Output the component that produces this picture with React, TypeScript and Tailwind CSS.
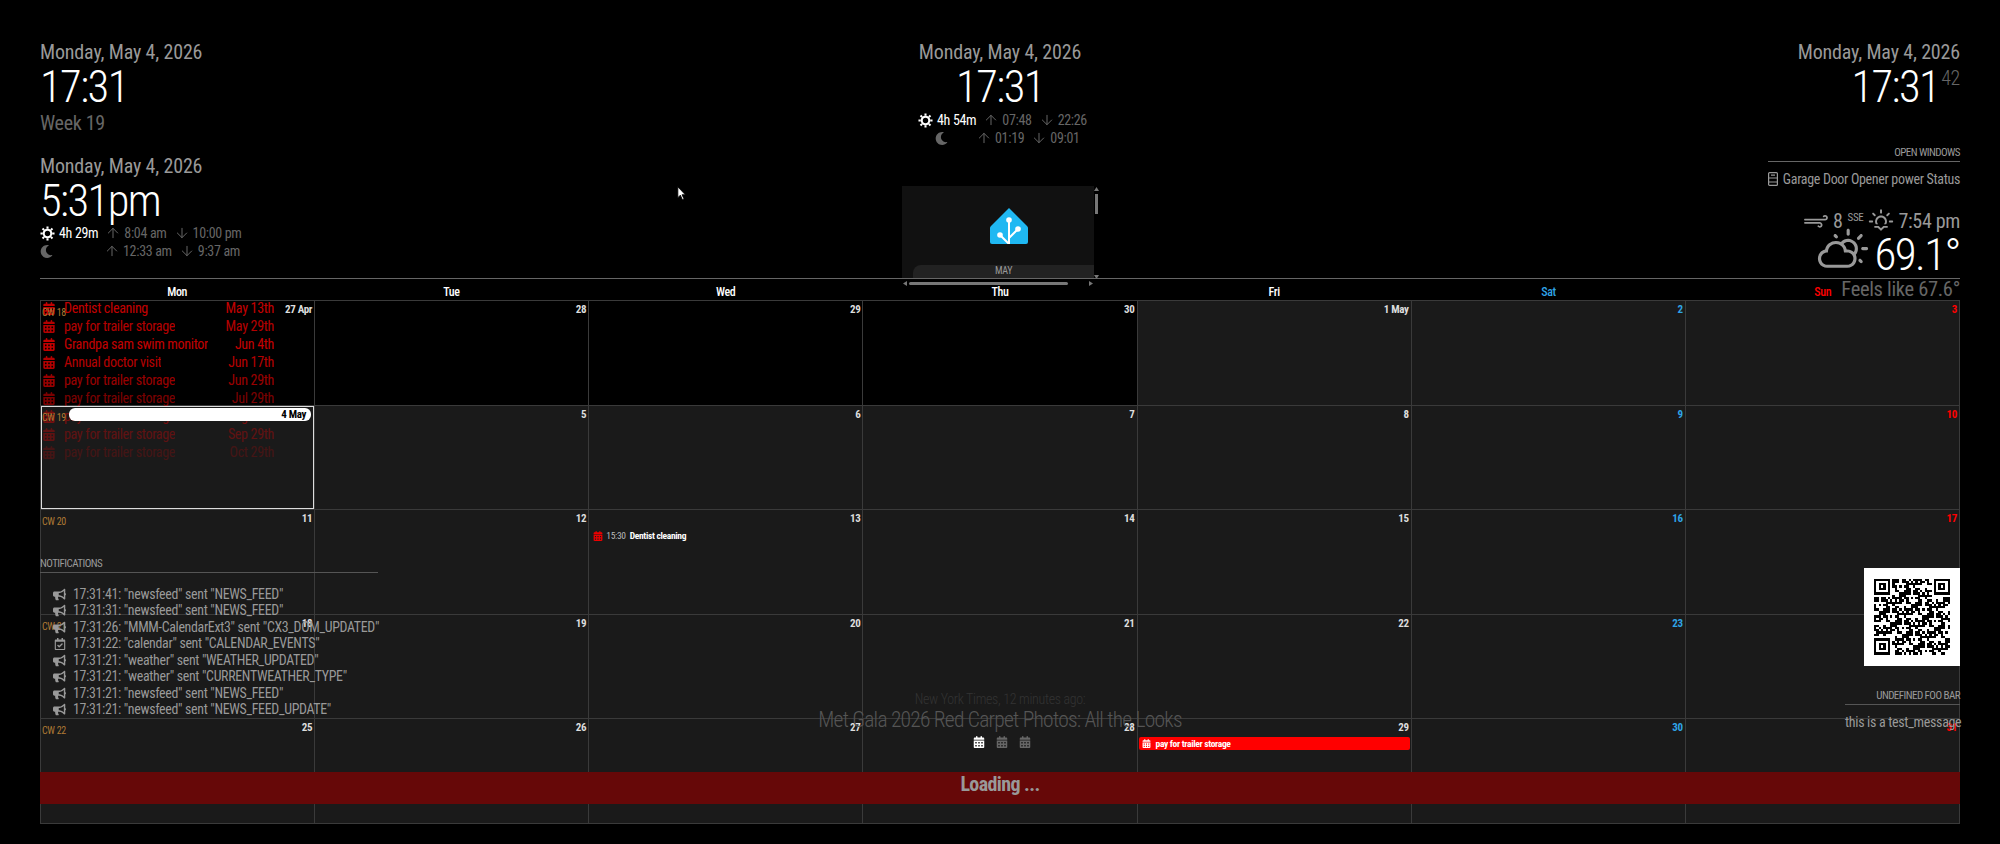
import { ArrowUp, ArrowDown } from "lucide-react";
import { FaBullhorn, FaMoon, FaRegCalendarCheck } from "react-icons/fa";
import { FaCalendarDays } from "react-icons/fa6";
import { WiDayCloudy, WiStrongWind, WiSunset } from "react-icons/wi";

const weekdays = [
  { label: "Mon", color: "text-white" },
  { label: "Tue", color: "text-white" },
  { label: "Wed", color: "text-white" },
  { label: "Thu", color: "text-white" },
  { label: "Fri", color: "text-white" },
  { label: "Sat", color: "text-[#2fa4e7]" },
  { label: "Sun", color: "text-[#f00]" },
];

const weeks = [
  { cw: 18, days: ["27 Apr", "28", "29", "30", "1 May", "2", "3"] },
  { cw: 19, days: ["4 May", "5", "6", "7", "8", "9", "10"] },
  { cw: 20, days: ["11", "12", "13", "14", "15", "16", "17"] },
  { cw: 21, days: ["18", "19", "20", "21", "22", "23", "24"] },
  { cw: 22, days: ["25", "26", "27", "28", "29", "30", "31"] },
];

const agenda = [
  { title: "Dentist cleaning", date: "May 13th", fade: "opacity-[.76]" },
  { title: "pay for trailer storage", date: "May 29th", fade: "opacity-[.7]" },
  { title: "Grandpa sam swim monitor", date: "Jun 4th", fade: "opacity-[.76]" },
  { title: "Annual doctor visit", date: "Jun 17th", fade: "opacity-[.7]" },
  { title: "pay for trailer storage", date: "Jun 29th", fade: "opacity-[.6]" },
  { title: "pay for trailer storage", date: "Jul 29th", fade: "opacity-[.48]" },
  { title: "pay for trailer storage", date: "Aug 29th", fade: "opacity-[.4]" },
  { title: "pay for trailer storage", date: "Sep 29th", fade: "opacity-[.3]" },
  { title: "pay for trailer storage", date: "Oct 29th", fade: "opacity-[.18]" },
];

const notifications = [
  { text: '17:31:41: "newsfeed" sent "NEWS_FEED"' },
  { text: '17:31:31: "newsfeed" sent "NEWS_FEED"' },
  { text: '17:31:26: "MMM-CalendarExt3" sent "CX3_DOM_UPDATED"' },
  { text: '17:31:22: "calendar" sent "CALENDAR_EVENTS"', check: true },
  { text: '17:31:21: "weather" sent "WEATHER_UPDATED"' },
  { text: '17:31:21: "weather" sent "CURRENTWEATHER_TYPE"' },
  { text: '17:31:21: "newsfeed" sent "NEWS_FEED"' },
  { text: '17:31:21: "newsfeed" sent "NEWS_FEED_UPDATE"' },
];

// fake qr matrix: real finder squares, seeded noise for the rest
function qrCells() {
  const size = 33;
  const cells: [number, number][] = [];
  let seed = 19;
  const finder = (x: number, y: number) => {
    const dx = x < 7 ? x : x - 26;
    const dy = y < 7 ? y : y - 26;
    const ring = Math.min(dx, dy, 6 - dx, 6 - dy);
    return ring === 0 || ring === 2;
  };
  for (let y = 0; y < size; y++) {
    for (let x = 0; x < size; x++) {
      seed = (seed * 73 + 41) % 1021;
      const inFinder = (x < 8 && y < 8) || (x > 24 && y < 8) || (x < 8 && y > 24);
      if (inFinder ? x !== 7 && x !== 25 && y !== 7 && y !== 25 && finder(x, y) : seed % 100 < 52) {
        cells.push([x, y]);
      }
    }
  }
  return cells;
}

function SunIcon() {
  return (
    <svg viewBox="0 0 16 16" className="w-[15px] h-[15px] shrink-0">
      <circle cx="8" cy="8" r="4" fill="none" stroke="#fff" strokeWidth="2.2" />
      <path d="M8 0.5V3 M8 13V15.5 M0.5 8H3 M13 8H15.5 M2.7 2.7L4.4 4.4 M11.6 11.6L13.3 13.3 M13.3 2.7L11.6 4.4 M4.4 11.6L2.7 13.3" stroke="#fff" strokeWidth="2.2" />
    </svg>
  );
}

function SunRow({ daylight, rise, set, offset = "" }: { daylight: string; rise: string; set: string; offset?: string }) {
  return (
    <div className={`flex items-center h-[18px] text-[14px] text-[#666] ${offset}`}>
      <SunIcon />
      <span className="ml-[4px] text-white">{daylight}</span>
      <ArrowUp className="ml-[7px] w-[16px] h-[16px] shrink-0" strokeWidth={1.5} />
      <span className="ml-[3px]">{rise}</span>
      <ArrowDown className="ml-[7px] w-[16px] h-[16px] shrink-0" strokeWidth={1.5} />
      <span className="ml-[3px]">{set}</span>
    </div>
  );
}

function MoonRow({ rise, set, indent, offset = "" }: { rise: string; set: string; indent: string; offset?: string }) {
  return (
    <div className={`flex items-center h-[18px] text-[14px] text-[#666] ${offset}`}>
      <FaMoon className="text-[#666] text-[13px] shrink-0" />
      <ArrowUp className={`${indent} w-[16px] h-[16px] shrink-0`} strokeWidth={1.5} />
      <span className="ml-[3px]">{rise}</span>
      <ArrowDown className="ml-[7px] w-[16px] h-[16px] shrink-0" strokeWidth={1.5} />
      <span className="ml-[3px]">{set}</span>
    </div>
  );
}

function DateLine() {
  return <div className="text-[20px] leading-[24px] tracking-[-0.008em] text-[#999]">Monday, May 4, 2026</div>;
}

function ClockTime({ children }: { children: string }) {
  return <div className="text-[44.5px] leading-[46px] font-light tracking-[-0.035em] text-white">{children}</div>;
}

function Clocks() {
  return (
    <div className="flex justify-between h-[238px]">
      <div className="w-[400px]">
        <DateLine />
        <ClockTime>17:31</ClockTime>
        <div className="mt-[1px] text-[20px] leading-[24px] text-[#666]">Week 19</div>
        <div className="mt-[19px]">
          <DateLine />
        </div>
        <ClockTime>5:31pm</ClockTime>
        <div>
          <SunRow daylight="4h 29m" rise="8:04 am" set="10:00 pm" />
          <MoonRow rise="12:33 am" set="9:37 am" indent="ml-[51px]" />
        </div>
      </div>

      <div className="flex flex-col items-center w-[400px]">
        <DateLine />
        <ClockTime>17:31</ClockTime>
        <div className="mt-[1px] w-[172px] whitespace-nowrap">
          <SunRow daylight="4h 54m" rise="07:48" set="22:26" offset="ml-[4px]" />
          <MoonRow rise="01:19" set="09:01" indent="ml-[28px]" offset="ml-[21px]" />
        </div>
        <HomeAssistantFrame />
      </div>

      <div className="flex flex-col items-end w-[400px] text-right">
        <DateLine />
        <div className="flex items-start text-white">
          <ClockTime>17:31</ClockTime>
          <span className="ml-[2px] mt-[4px] text-[20px] leading-[20px] font-light text-[#666]">42</span>
        </div>
        <div className="mt-[35px] w-[192px] border-b border-[#666] pb-[1px] text-[11px] leading-[15px] tracking-[-0.05em] text-[#999]">OPEN WINDOWS</div>
        <div className="mt-[6px] flex items-center gap-[5px] text-[14px] leading-[22px] text-[#999]">
          <svg viewBox="0 0 10 14" className="w-[10px] h-[14px]" fill="none" stroke="#999" strokeWidth="1.2">
            <rect x="0.6" y="0.6" width="8.8" height="12.8" rx="1" />
            <path d="M0.6 6H9.4 M3 3.2H7 M0.6 10H9.4" />
          </svg>
          Garage Door Opener power Status
        </div>
        <div className="mt-[18px] flex items-center h-[26px] text-[20px] text-[#999]">
          <WiStrongWind className="text-[30px]" />
          <span className="ml-[2px]">8</span>
          <span className="ml-[5px] mb-[6px] text-[11px]">SSE</span>
          <WiSunset className="ml-[3px] text-[30px]" />
          <span className="ml-[2px]">7:54 pm</span>
        </div>
        <div className="flex items-center h-[44px] mt-[-1px]">
          <WiDayCloudy className="text-[56px] text-[#999]" />
          <span className="ml-[3px] text-[45px] font-light tracking-[-0.035em] text-white leading-[46px]">69.1°</span>
        </div>
        <div className="text-[20.5px] leading-[24px] text-[#666]">Feels like 67.6°</div>
      </div>
    </div>
  );
}

function HomeAssistantFrame() {
  return (
    <div className="relative mt-[39px] mr-[4px] w-[192px] h-[93px] bg-[#111] shrink-0">
      <svg viewBox="0 0 38 36" className="absolute left-[88px] top-[22px] w-[38px] h-[36px]">
        <path d="M19 0 L37 18 Q38 19 38 20 V34 Q38 36 36 36 H2 Q0 36 0 34 V20 Q0 19 1 18 Z" fill="#1fb8f2" />
        <path d="M19 12 V36 M10 27 L19 36 M28 21 L19 30" stroke="#fff" strokeWidth="2" fill="none" />
        <circle cx="19" cy="12" r="2.8" fill="#fff" />
        <circle cx="10" cy="27" r="2.8" fill="#fff" />
        <circle cx="28" cy="21" r="2.8" fill="#fff" />
      </svg>
      <div className="absolute left-[11px] right-0 bottom-0 h-[14px] rounded-tl-lg bg-[#222] text-center text-[10px] leading-[11px] text-[#999]">MAY</div>
      <div className="absolute left-[192px] top-0 w-[5px] h-[93px]">
        <svg viewBox="0 0 5 4" className="absolute top-[1px] w-[5px] h-[4px]"><path d="M2.5 0L5 4H0Z" fill="#777" /></svg>
        <div className="mx-auto mt-[8px] w-[3px] h-[20px] bg-[#777]"></div>
        <svg viewBox="0 0 5 4" className="absolute bottom-0 w-[5px] h-[4px]"><path d="M0 0H5L2.5 4Z" fill="#777" /></svg>
      </div>
      <svg viewBox="0 0 4 5" className="absolute left-[1px] top-[95px] w-[4px] h-[5px]"><path d="M0 2.5L4 0V5Z" fill="#777" /></svg>
      <div className="absolute left-[7px] top-[96px] w-[159px] h-[3px] rounded-full bg-[#777]"></div>
      <svg viewBox="0 0 4 5" className="absolute left-[187px] top-[95px] w-[4px] h-[5px]"><path d="M4 2.5L0 0V5Z" fill="#777" /></svg>
    </div>
  );
}

function Cell({ week, day, index }: { week: number; day: string; index: number }) {
  const past = week === 0 && index < 4;
  const dayColor = index === 5 ? "text-[#2fa4e7]" : index === 6 ? "text-[#f00]" : "text-[#ddd]";
  const isToday = week === 1 && index === 0;
  return (
    <div className={`relative ${past ? "bg-black" : "bg-[#1a1a1a]"}`}>
      {index === 0 && (
        <div className="absolute left-[1px] top-[6px] z-30 text-[10px] leading-[12px] text-[#b07a35]">CW {weeks[week].cw}</div>
      )}
      {isToday ? (
        <>
          <div className="absolute inset-0 z-20 border border-[#ddd] pointer-events-none"></div>
          <div className="absolute left-[28px] right-[3px] top-[2px] z-20 h-[13px] rounded-[6px] bg-white pr-[5px] text-right text-[11px] leading-[13px] font-bold text-black">
            {day}
          </div>
        </>
      ) : (
        <div className={`pt-[2px] pr-[2px] text-right text-[11px] leading-[13px] font-bold ${dayColor}`}>{day}</div>
      )}
      {week === 2 && index === 2 && (
        <div className="mt-[4px] flex items-center pl-[4px] text-[9.5px] leading-[13px]">
          <FaCalendarDays className="text-[#e00] text-[10px]" />
          <span className="ml-[3px] text-[#bbb]">15:30</span>
          <span className="ml-[4px] font-bold text-white">Dentist cleaning</span>
        </div>
      )}
      {week === 4 && index === 4 && (
        <div className="mt-[3px] mx-[1px] flex items-center h-[13px] rounded-[2px] bg-[#f00] pl-[3px] text-[9.5px] font-bold text-white">
          <FaCalendarDays className="text-[9px]" />
          <span className="ml-[5px]">pay for trailer storage</span>
        </div>
      )}
    </div>
  );
}

function Calendar() {
  return (
    <div className="relative">
      <div className="grid grid-cols-7 h-[22px] border-t border-[#666] text-center text-[12px] leading-[26px] font-medium">
        {weekdays.map((d) => (
          <div key={d.label} className={d.color}>{d.label}</div>
        ))}
      </div>
      <div className="grid grid-cols-7 grid-rows-5 h-[524px] gap-px border border-[#3a3a3a] bg-[#3a3a3a]">
        {weeks.map((w, wi) =>
          w.days.map((day, di) => <Cell key={day + wi} week={wi} day={day} index={di} />)
        )}
      </div>
    </div>
  );
}

function Agenda() {
  return (
    <div className="absolute left-[43px] top-[300px] z-10 w-[231px]">
      {agenda.map((row, i) => (
        <div key={i} className={`flex items-center h-[17.9px] text-[14px] text-[#f00] ${row.fade}`}>
          <FaCalendarDays className="w-[12px] h-[13px] shrink-0" />
          <span className="ml-[9px] truncate">{row.title}</span>
          <span className="ml-auto">{row.date}</span>
        </div>
      ))}
    </div>
  );
}

function Notifications() {
  return (
    <div className="absolute left-[40px] top-[556px] z-30 w-[338px]">
      <div className="border-b border-[#555] pb-[1px] text-[11px] leading-[15px] tracking-[-0.05em] text-[#999]">NOTIFICATIONS</div>
      <div className="mt-[13px]">
        {notifications.map((n, i) => (
          <div key={i} className="flex items-center h-[16.5px] text-[13.9px] text-[#999] whitespace-nowrap">
            {n.check ? <FaRegCalendarCheck className="ml-[14px] text-[#999] text-[12px]" /> : <FaBullhorn className="ml-[13px] text-[#999] text-[13px]" />}
            <span className="absolute left-[33px]">{n.text}</span>
          </div>
        ))}
      </div>
    </div>
  );
}

function NewsFeed() {
  return (
    <div className="absolute left-0 right-0 top-[691px] z-30 text-center">
      <div className="text-[14px] leading-[16px] font-light text-[#333]">New York Times, 12 minutes ago:</div>
      <div className="text-[21.5px] leading-[26px] font-light tracking-[-0.035em] text-[#555]">Met Gala 2026 Red Carpet Photos: All the Looks</div>
      <div className="mt-[3px] ml-[3px] flex justify-center gap-[11px] text-[12px] text-[#666]">
        <FaCalendarDays className="text-white" />
        <FaCalendarDays />
        <FaCalendarDays />
      </div>
    </div>
  );
}

function QrWidget() {
  return (
    <div className="absolute right-[40px] top-[568px] z-30 w-[115px]">
      <div className="ml-auto w-[96px] h-[98px] bg-white p-[10px]">
        <svg viewBox="0 0 33 33" shapeRendering="crispEdges" className="w-[76px] h-[77px]">
          {qrCells().map(([x, y]) => (
            <rect key={`${x}-${y}`} x={x} y={y} width="1" height="1" fill="#000" />
          ))}
        </svg>
      </div>
      <div className="mt-[22px] border-b border-[#555] pb-[1px] text-right text-[11px] leading-[15px] tracking-[-0.05em] text-[#999]">UNDEFINED FOO BAR</div>
      <div className="mt-[8px] text-[14px] leading-[18px] text-[#999] whitespace-nowrap">this is a test_message</div>
    </div>
  );
}

export default function App() {
  return (
    <div className="relative w-[2000px] h-[844px] overflow-hidden bg-black px-[40px] pt-[40px] font-['Roboto',sans-serif] [font-stretch:75%] tracking-[-0.02em]">
      <Clocks />
      <Calendar />
      <Agenda />
      <Notifications />
      <NewsFeed />
      <QrWidget />
      <div className="absolute left-[40px] right-[40px] top-[772px] z-40 h-[32px] bg-[#660808] text-center text-[20px] leading-[24px] font-bold tracking-[-0.03em] text-[#999]">
        Loading ...
      </div>
      <svg viewBox="0 0 12 18" className="absolute left-[677px] top-[186px] z-50 w-[10px] h-[15px]">
        <path d="M1 1 V14 L4 11 L6.5 16.5 L8.5 15.5 L6 10.5 H10 Z" fill="#fff" stroke="#000" strokeWidth="1" />
      </svg>
    </div>
  );
}
